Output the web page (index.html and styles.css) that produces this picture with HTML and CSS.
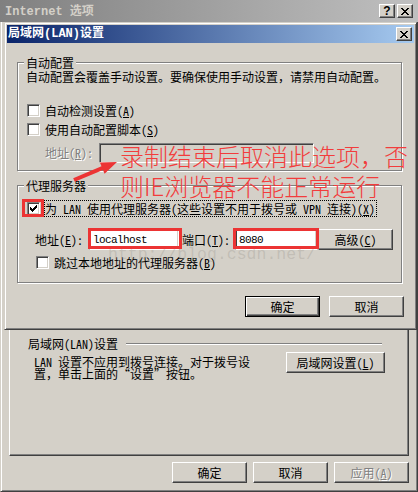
FILE: index.html
```html
<!DOCTYPE html>
<html lang="zh-CN">
<head>
<meta charset="utf-8">
<title>局域网(LAN)设置</title>
<link rel="stylesheet" href="styles.css">
</head>
<body>
<div class="screen">
  <div class="win">
    <div class="titlebar inactive">
      <span class="title-text">Internet 选项</span>
      <span class="cap-btns">
        <span class="cap-btn help">?</span>
        <span class="cap-btn"><svg width="8" height="7" viewBox="0 0 8 7" shape-rendering="crispEdges"><path d="M0 0h2v1H0zM6 0h2v1H6zM1 1h2v1H1zM5 1h2v1H5zM2 2h4v1H2zM3 3h2v1H3zM2 4h4v1H2zM1 5h2v1H1zM5 5h2v1H5zM0 6h2v1H0zM6 6h2v1H6z"/></svg></span>
      </span>
    </div>
    <div class="win-body">
      <div class="tabpanel">
        <section class="lan">
          <div class="lan-head"><span>局域网(LAN)设置</span><span class="etch"></span></div>
          <div class="lan-body">
            <p class="lan-text">LAN 设置不应用到拨号连接。对于拨号设<br>置，单击上面的<span class="fw">“</span>设置<span class="fw">”</span>按钮。</p>
            <button class="btn lan-btn">局域网设置(<u>L</u>)</button>
          </div>
        </section>
      </div>
      <div class="btn-row win-btns">
        <button class="btn">确定</button>
        <button class="btn">取消</button>
        <button class="btn off">应用(<u>A</u>)</button>
      </div>
    </div>
  </div>

  <div class="dlg">
    <div class="titlebar active">
      <span class="title-text">局域网(LAN)设置</span>
      <span class="cap-btn"><svg width="8" height="7" viewBox="0 0 8 7" shape-rendering="crispEdges"><path d="M0 0h2v1H0zM6 0h2v1H6zM1 1h2v1H1zM5 1h2v1H5zM2 2h4v1H2zM3 3h2v1H3zM2 4h4v1H2zM1 5h2v1H1zM5 5h2v1H5zM0 6h2v1H0zM6 6h2v1H6z"/></svg></span>
    </div>
    <div class="dlg-body">
      <section class="grp grp-auto">
        <h2 class="grp-title">自动配置</h2>
        <p class="grp-desc">自动配置会覆盖手动设置。要确保使用手动设置，请禁用自动配置。</p>
        <label class="chk auto1"><span class="box"></span><span>自动检测设置(<u>A</u>)</span></label>
        <label class="chk auto2"><span class="box"></span><span>使用自动配置脚本(<u>S</u>)</span></label>
        <div class="field-row script-row">
          <span class="lbl off script-lbl">地址(<u>R</u>):</span>
          <span class="edit off script-edit"></span>
        </div>
      </section>
      <section class="grp grp-proxy">
        <h2 class="grp-title">代理服务器</h2>
        <label class="chk use-proxy"><span class="box"><svg width="7" height="7" viewBox="0 0 7 7" shape-rendering="crispEdges"><path d="M6 0h1v1H6zM5 1h2v1H5zM0 2h1v1H0zM4 2h3v1H4zM0 3h2v1H0zM3 3h3v1H3zM0 4h5v1H0zM1 5h3v1H1zM2 6h1v1H2z"/></svg></span><span class="focus">为 LAN 使用代理服务器(这些设置不用于拨号或 VPN 连接)(<u>X</u>)</span></label>
        <div class="field-row proxy-row">
          <span class="lbl addr-lbl">地址(<u>E</u>):</span>
          <span class="edit addr-edit">localhost</span>
          <span class="lbl port-lbl">端口(<u>T</u>):</span>
          <span class="edit port-edit">8080</span>
          <button class="btn adv-btn">高级(<u>C</u>)</button>
        </div>
        <label class="chk bypass"><span class="box"></span><span>跳过本地地址的代理服务器(<u>B</u>)</span></label>
      </section>
      <div class="btn-row dlg-btns">
        <button class="btn default">确定</button>
        <button class="btn">取消</button>
      </div>
    </div>
  </div>

  <div class="annot">
    <span class="watermark">http://blog.csdn.net/</span>
    <span class="mark mark-chk"></span>
    <span class="mark mark-addr"></span>
    <span class="mark mark-port"></span>
    <svg class="arrow" width="418" height="492" viewBox="0 0 418 492"><polygon points="73.2,178.2 101.5,166.3 99.9,162.6 117,162 104.6,173.7 103,170 74.8,181.8" fill="#ec3434"/></svg>
    <p class="note">录制结束后取消此选项，否<br>则IE浏览器不能正常运行</p>
  </div>
</div>
</body>
</html>
```

FILE: styles.css
```css
* { box-sizing: border-box; }
html, body { margin: 0; padding: 0; }
body {
  width: 418px;
  height: 492px;
  overflow: hidden;
  background: #d4d0c8;
  color: #000;
  font-family: "Noto Sans Mono CJK SC", "Noto Sans CJK SC", sans-serif;
  font-size: 12px;
  line-height: 14px;
}
p, h2 { margin: 0; }
u { text-decoration: underline; text-underline-offset: 1px; }
button {
  font: inherit;
  color: inherit;
  margin: 0;
  padding: 0;
  background: none;
  border: 0;
}

.screen { position: relative; width: 418px; height: 492px; }

/* ---------- outer window ---------- */
.win {
  display: flex;
  flex-direction: column;
  width: 418px;
  height: 492px;
  background: #d4d0c8;
}
.titlebar {
  display: flex;
  align-items: center;
  flex: none;
}
.titlebar .title-text {
  flex: 1;
  font-family: "Liberation Mono", "Noto Sans CJK SC", monospace;
  font-weight: bold;
  font-size: 12px;
  white-space: nowrap;
}
.titlebar.inactive {
  height: 22px;
  padding: 0 5px 0 5px;
  background: linear-gradient(to right, #808080, #c0c0c0);
  color: #d4d0c8;
}
.titlebar.inactive .title-text { padding-top: 1px; }
.cap-btns { display: flex; gap: 2px; }
.cap-btn {
  width: 16px;
  height: 14px;
  flex: none;
  display: flex;
  align-items: center;
  justify-content: center;
  background: #d4d0c8;
  border: 1px solid;
  border-color: #fff #404040 #404040 #fff;
  box-shadow: inset -1px -1px #808080;
  color: #000;
}
.cap-btn svg { display: block; fill: #000; margin-top: 1px; }
.cap-btn.help {
  font-family: "Liberation Sans", sans-serif;
  font-weight: bold;
  font-size: 12px;
  line-height: 12px;
}

.win-body {
  flex: 1;
  display: flex;
  flex-direction: column;
  border-left: 1px solid #d4d0c8;
  border-right: 1px solid #404040;
  border-bottom: 1px solid #404040;
  box-shadow: inset 1px 0 #fff, inset -1px -1px #808080;
  padding: 0 8px 8px 8px;
}
.tabpanel {
  flex: 1;
  display: flex;
  flex-direction: column;
  margin-top: 8px;
  border: 1px solid;
  border-color: #fff #404040 #404040 #fff;
  box-shadow: inset -1px -1px #808080;
}
.lan { margin: auto 23px 75px 18px; }
.lan-head { display: flex; align-items: center; height: 14px; white-space: nowrap; }
.etch {
  flex: 1;
  height: 2px;
  margin: 0 3px 0 8px;
  border-top: 1px solid #808080;
  border-bottom: 1px solid #fff;
}
.lan-body { display: flex; margin-top: 1px; padding-left: 6px; }
.lan-text { flex: 1; min-width: 0; margin-top: 4px; line-height: 12px; white-space: nowrap; }
.fw { display: inline-block; width: 12px; text-align: center; }

.btn-row { display: flex; justify-content: flex-end; flex: none; }
.win-btns { margin-top: 6px; gap: 6px; }

.btn {
  flex: none;
  height: 21px;
  width: 75px;
  display: flex;
  align-items: center;
  justify-content: center;
  white-space: nowrap;
  background: #d4d0c8;
  border: 1px solid;
  border-color: #fff #404040 #404040 #fff;
  box-shadow: inset -1px -1px #808080;
}
.btn.default {
  border-color: #000;
  box-shadow: inset 1px 1px #fff, inset -1px -1px #404040, inset -2px -2px #808080;
}
.btn.lan-btn { width: 99px; }
.off { color: #808080; text-shadow: 1px 1px 0 #fff; }

/* ---------- LAN settings dialog ---------- */
.dlg {
  position: absolute;
  left: 4px;
  top: 22px;
  width: 413px;
  height: 308px;
  display: flex;
  flex-direction: column;
  background: #d4d0c8;
  border: 1px solid;
  border-color: #d4d0c8 #404040 #404040 #d4d0c8;
  box-shadow: inset 1px 1px #fff, inset -1px -1px #808080;
  padding: 2px;
}
.titlebar.active {
  height: 18px;
  padding: 0 2px 0 1px;
  background: linear-gradient(to right, #0a246a, #a6caf0);
  color: #fff;
}
.dlg-body {
  flex: 1;
  display: flex;
  flex-direction: column;
  padding: 0 10px;
}

.grp {
  position: relative;
  margin-right: 2px;
  border: 1px solid #808080;
  box-shadow: inset 1px 1px #fff, 1px 1px #fff;
}
.grp-title {
  position: absolute;
  left: 6px;
  top: -7px;
  padding: 0 2px;
  background: #d4d0c8;
  font-size: 12px;
  font-weight: normal;
  line-height: 14px;
  white-space: nowrap;
}
.grp-auto { margin-top: 19px; padding: 7px 8px 7px 8px; }
.grp-desc { white-space: nowrap; }

.chk {
  display: flex;
  align-items: center;
  gap: 5px;
  height: 15px;
  white-space: nowrap;
}
.box {
  width: 13px;
  height: 13px;
  flex: none;
  display: flex;
  align-items: center;
  justify-content: center;
  background: #fff;
  border: 1px solid;
  border-color: #808080 #fff #fff #808080;
  box-shadow: inset 1px 1px #404040, inset -1px -1px #d4d0c8;
}
.box svg { display: block; fill: #000; }
.auto1 { margin-top: 19px; }
.auto1 .box, .auto2 .box, .use-proxy .box { margin-left: 1px; }
.auto2 { margin-top: 4px; }

.field-row { display: flex; align-items: center; white-space: nowrap; }
.script-row { margin-top: 6px; height: 20px; }
.script-lbl { margin-left: 19px; width: 54px; }
.edit {
  flex: none;
  display: flex;
  align-items: center;
  height: 21px;
  padding: 0 3px;
  background: #fff;
  border: 1px solid;
  border-color: #808080 #fff #fff #808080;
  box-shadow: inset 1px 1px #404040, inset -1px -1px #d4d0c8;
  font-family: "Liberation Mono", monospace;
  font-size: 11px;
  letter-spacing: -0.6px;
}
.edit.off { background: #d4d0c8; text-shadow: none; }
.script-edit { width: 215px; height: 20px; }

.grp-proxy { margin-top: 14px; padding: 14px 8px 12px 8px; }
.use-proxy { height: 17px; gap: 4px; }
.focus {
  height: 17px;
  display: flex;
  align-items: center;
  border: 1px dotted #000;
  padding-right: 1px;
}
.proxy-row { margin-top: 12px; height: 21px; }
.addr-lbl { margin-left: 9px; width: 54px; }
.addr-edit { width: 90px; }
.port-lbl { margin-left: 3px; width: 53px; }
.port-edit { width: 82px; }
.adv-btn { margin-left: 1px; }
.bypass { margin-top: 5px; }
.bypass .box { margin-left: 10px; }

.dlg-btns { margin-top: 13px; gap: 9px; }

/* ---------- annotations ---------- */
.annot { position: absolute; left: 0; top: 0; width: 418px; height: 492px; pointer-events: none; }
.watermark {
  position: absolute;
  left: 108px;
  top: 247px;
  font-family: "Liberation Mono", monospace;
  font-size: 16.5px;
  line-height: 16px;
  color: rgba(150, 146, 138, 0.3);
  white-space: nowrap;
}
.mark { position: absolute; border: 3px solid #ec3434; }
.mark-chk { left: 22px; top: 199px; width: 22px; height: 18px; }
.mark-addr { left: 88px; top: 228px; width: 94px; height: 21px; }
.mark-port { left: 233px; top: 228px; width: 86px; height: 21px; }
.arrow { position: absolute; left: 0; top: 0; }
.note {
  position: absolute;
  left: 120px;
  top: 141px;
  color: #f23c3c;
  font-family: "Noto Sans CJK SC", sans-serif;
  font-weight: 300;
  font-size: 24px;
  line-height: 30px;
  white-space: nowrap;
}
```
